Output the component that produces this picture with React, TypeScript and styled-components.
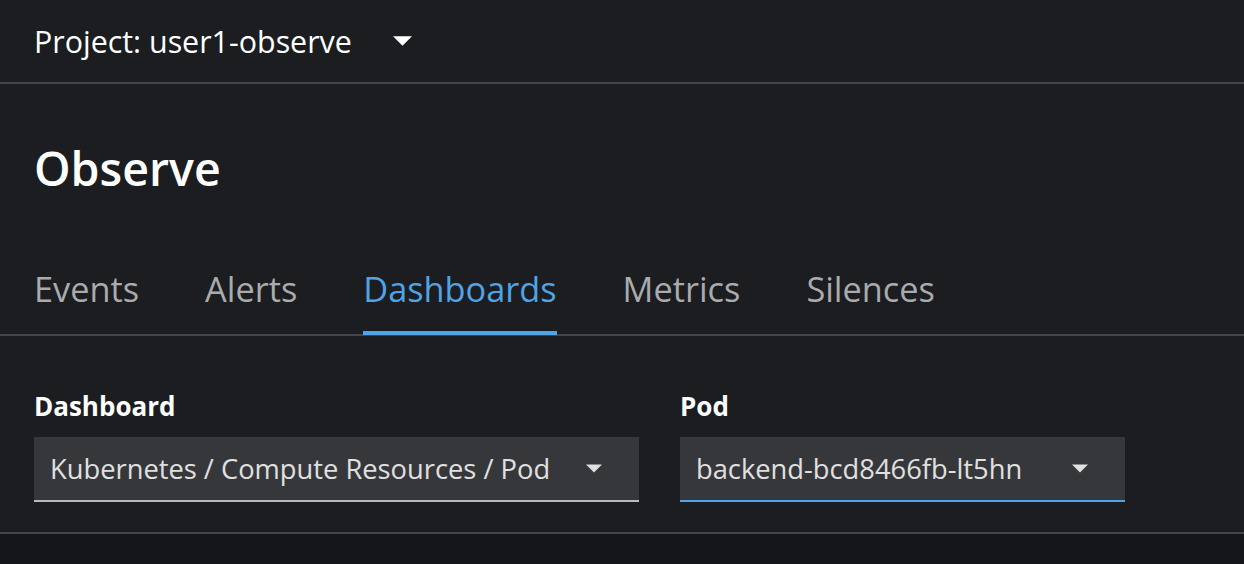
import React from "react";
import styled, { createGlobalStyle } from "styled-components";

const Global = createGlobalStyle`
  html, body { margin: 0; padding: 0; background: #151619; }
  body { font-family: "Open Sans", "Noto Sans", sans-serif; -webkit-font-smoothing: antialiased; }
  #root { min-height: 564px; }
`;

const Page = styled.div`
  width: 1244px;
  height: 564px;
  overflow: hidden;
  display: flex;
  flex-direction: column;
  background: #151619;
`;

const Main = styled.div`
  background: #1b1d21;
  display: flex;
  flex-direction: column;
`;

const ProjectBar = styled.div`
  height: 82px;
  border-bottom: 2px solid #444548;
  display: flex;
  align-items: center;
  padding-left: 34px;
  gap: 41px;
  color: #fff;
  font-size: 30.4px;
`;

const Caret = styled.svg<{ $w: number; $h: number }>`
  width: ${(p) => p.$w}px;
  height: ${(p) => p.$h}px;
  flex: none;
`;

const TitleWrap = styled.h1`
  margin: 0;
  height: 168px;
  display: flex;
  align-items: center;
  padding-left: 34px;
  color: #fff;
  font-size: 46.5px;
  font-weight: 600;
`;

const Tabs = styled.div`
  display: flex;
  padding-left: 1px;
  border-bottom: 2px solid #444548;
  height: 82px;
`;

const Tab = styled.div<{ $active?: boolean }>`
  position: relative;
  padding: 13px 33px 0;
  font-size: 34.3px;
  color: ${(p) => (p.$active ? "#4fa3e6" : "#aaabac")};
  &::after {
    content: "";
    position: absolute;
    left: 33px;
    right: 33px;
    bottom: -1px;
    height: 4px;
    background: ${(p) => (p.$active ? "#4fa3e6" : "transparent")};
  }
`;

const Filters = styled.div`
  display: flex;
  gap: 41px;
  padding: 53px 34px 30px;
  border-bottom: 2px solid #444548;
`;

const Field = styled.div<{ $w: number }>`
  width: ${(p) => p.$w}px;
  display: flex;
  flex-direction: column;
  gap: 14px;
`;

const Label = styled.div`
  color: #fff;
  font-size: 26px;
  font-weight: 700;
  line-height: 34px;
`;

const Select = styled.div<{ $focus?: boolean }>`
  height: 63px;
  background: #36373b;
  border-bottom: 2px solid ${(p) => (p.$focus ? "#4fa3e6" : "#b8bbbe")};
  display: flex;
  align-items: center;
  justify-content: space-between;
  padding: 0 37px 0 16px;
  color: #e0e0e0;
  font-size: 27.3px;
`;

const Down = ({ w, h }: { w: number; h: number }) => (
  <Caret $w={w} $h={h} viewBox="0 0 20 10">
    <polygon points="0,0 20,0 10,10" fill="currentColor" />
  </Caret>
);

export default function App() {
  return (
    <Page>
      <Global />
      <Main>
        <ProjectBar>
          <span>Project: user1-observe</span>
          <Down w={19} h={10} />
        </ProjectBar>
        <TitleWrap>Observe</TitleWrap>
        <Tabs>
          <Tab>Events</Tab>
          <Tab>Alerts</Tab>
          <Tab $active>Dashboards</Tab>
          <Tab>Metrics</Tab>
          <Tab>Silences</Tab>
        </Tabs>
        <Filters>
          <Field $w={605}>
            <Label>Dashboard</Label>
            <Select>
              <span>Kubernetes / Compute Resources / Pod</span>
              <Down w={16} h={9} />
            </Select>
          </Field>
          <Field $w={445}>
            <Label>Pod</Label>
            <Select $focus>
              <span>backend-bcd8466fb-lt5hn</span>
              <Down w={16} h={9} />
            </Select>
          </Field>
        </Filters>
      </Main>
    </Page>
  );
}
